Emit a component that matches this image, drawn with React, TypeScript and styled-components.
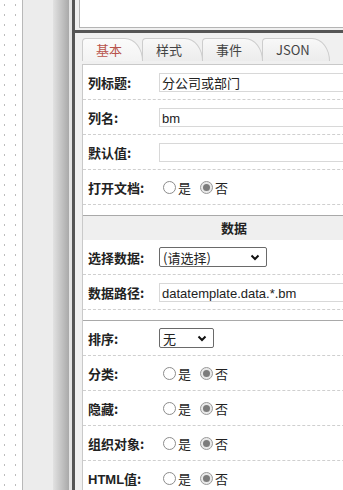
import React from "react";
import styled, { createGlobalStyle } from "styled-components";

const Global = createGlobalStyle`
  html, body { margin: 0; padding: 0; background: #fff; }
  body { width: 343px; height: 490px; overflow: hidden; }
  * { box-sizing: border-box; }
`;

const Page = styled.div`
  display: flex;
  width: 343px;
  height: 490px;
  overflow: hidden;
  font-family: "Noto Sans CJK SC", "Liberation Sans", sans-serif;
  color: #222;
`;

const GridCanvas = styled.div`
  flex: 0 0 23px;
  border-right: 1px solid #b8b8b8;
  background-color: #fff;
  background-image: radial-gradient(circle, #bdbdbd 0.7px, transparent 0.9px);
  background-size: 11px 10px;
  background-position: -1px 0;
`;

const SideStrip = styled.div`
  flex: 0 0 30px;
  background: #ececec;
`;

const Splitter = styled.div`
  flex: 0 0 16px;
  background: linear-gradient(to right, #e2e2e2, #a9a9a9);
`;

const SplitGap = styled.div`
  flex: 0 0 3px;
  background: #e4e4e4;
`;

const Main = styled.div`
  flex: 1 0 auto;
  width: 271px;
  height: 490px;
  display: flex;
  flex-direction: column;
  border-left: 3px solid #555;
  background: #f0f0f0;
  overflow: hidden;
`;

const TopArea = styled.div`
  flex: 0 0 30px;
  padding: 0 0 2px 4px;
  display: flex;
`;

const TopBox = styled.div`
  flex: 1;
  background: #fff;
  border: 1px solid #b4b4b4;
  border-top: none;
  border-right: none;
`;

const Divider = styled.div`
  flex: 0 0 3px;
  background: #555;
`;

const PropPanel = styled.div`
  flex: 1 0 auto;
  padding: 5px 0 0 7px;
  display: flex;
  flex-direction: column;
`;

const TabBar = styled.div`
  display: flex;
  flex: 0 0 23px;
  margin-bottom: 3px;
`;

const Tab = styled.div<{ $active?: boolean; $w: number }>`
  flex: 0 0 ${(p) => p.$w}px;
  height: 23px;
  margin-right: -1px;
  border: 1px solid #cdcdcd;
  border-bottom: none;
  border-radius: 4px 18px 0 0 / 4px 23px 0 0;
  background: ${(p) =>
    p.$active
      ? "linear-gradient(#fbfbfb, #f3f3f3)"
      : "linear-gradient(#f8f8f8, #ececec)"};
  color: ${(p) => (p.$active ? "#b8544c" : "#444")};
  font-size: 13px;
  line-height: 22px;
  padding-left: 13px;
`;

const Content = styled.div`
  width: 303px;
  flex: 1 0 auto;
  background: #fff;
  border-top: 1px solid #c9c9c9;
  border-left: 1px solid #c9c9c9;
`;

const Section = styled.div<{ $first?: boolean }>`
  border-top: ${(p) => (p.$first ? "none" : "1px solid #a9a9a9")};
  padding-bottom: 10px;
`;

const SectionHead = styled.div`
  height: 24px;
  background: #efefef;
  text-align: center;
  font-weight: bold;
  font-size: 13px;
  line-height: 24px;
`;

const Row = styled.div`
  display: flex;
  align-items: center;
  height: 35px;
  padding-left: 5px;
  border-bottom: 1px dashed #cfcfcf;
`;

const Label = styled.div`
  flex: 0 0 71px;
  font-weight: bold;
  font-size: 13px;
  color: #222;
`;

const TextBox = styled.div`
  flex: 1;
  height: 19px;
  border: 1px solid #d8d8d8;
  font-size: 13px;
  line-height: 17px;
  padding-left: 2px;
  color: #222;
  white-space: nowrap;
`;

const Latin = styled.span`
  font-family: "Liberation Sans", Arial, sans-serif;
`;

const Select = styled.div<{ $w: number }>`
  width: ${(p) => p.$w}px;
  height: 20px;
  border: 1px solid #6a6a6a;
  border-radius: 2px;
  display: flex;
  align-items: center;
  justify-content: space-between;
  padding: 0 6px 0 3px;
  font-size: 13px;
  color: #222;
`;

const RadioGroup = styled.div`
  display: flex;
  align-items: center;
  margin-left: 4px;
  font-size: 13px;
`;

const RadioItem = styled.div`
  display: flex;
  align-items: center;
  margin-right: 9px;
  gap: 2px;
`;

const Circle = styled.span<{ $on?: boolean }>`
  width: 13px;
  height: 13px;
  border-radius: 50%;
  border: 1px solid ${(p) => (p.$on ? "#9a9a9a" : "#8c8c8c")};
  background: ${(p) => (p.$on ? "#e9e9e9" : "#fff")};
  display: flex;
  align-items: center;
  justify-content: center;
  &::after {
    content: "";
    display: ${(p) => (p.$on ? "block" : "none")};
    width: 7px;
    height: 7px;
    border-radius: 50%;
    background: #7c7c7c;
  }
`;

const Chevron = () => (
  <svg width="10" height="7" viewBox="0 0 10 7">
    <polyline points="1.5,1.5 5,5 8.5,1.5" fill="none" stroke="#111" strokeWidth="2" />
  </svg>
);

const YesNo = () => (
  <RadioGroup>
    <RadioItem>
      <Circle />
      是
    </RadioItem>
    <RadioItem>
      <Circle $on />
      否
    </RadioItem>
  </RadioGroup>
);

export default function App() {
  return (
    <>
      <Global />
      <Page>
        <GridCanvas />
        <SideStrip />
        <Splitter />
        <SplitGap />
        <Main>
          <TopArea>
            <TopBox />
          </TopArea>
          <Divider />
          <PropPanel>
            <TabBar>
              <Tab $active $w={61}>基本</Tab>
              <Tab $w={61}>样式</Tab>
              <Tab $w={61}>事件</Tab>
              <Tab $w={68}>JSON</Tab>
            </TabBar>
            <Content>
              <Section $first>
                <Row>
                  <Label>列标题:</Label>
                  <TextBox>分公司或部门</TextBox>
                </Row>
                <Row>
                  <Label>列名:</Label>
                  <TextBox><Latin>bm</Latin></TextBox>
                </Row>
                <Row>
                  <Label>默认值:</Label>
                  <TextBox />
                </Row>
                <Row>
                  <Label>打开文档:</Label>
                  <YesNo />
                </Row>
              </Section>
              <Section>
                <SectionHead>数据</SectionHead>
                <Row>
                  <Label>选择数据:</Label>
                  <Select $w={108}>
                    <span>(请选择)</span>
                    <Chevron />
                  </Select>
                </Row>
                <Row>
                  <Label>数据路径:</Label>
                  <TextBox><Latin>datatemplate.data.*.bm</Latin></TextBox>
                </Row>
              </Section>
              <Section>
                <Row>
                  <Label>排序:</Label>
                  <Select $w={55}>
                    <span>无</span>
                    <Chevron />
                  </Select>
                </Row>
                <Row>
                  <Label>分类:</Label>
                  <YesNo />
                </Row>
                <Row>
                  <Label>隐藏:</Label>
                  <YesNo />
                </Row>
                <Row>
                  <Label>组织对象:</Label>
                  <YesNo />
                </Row>
                <Row>
                  <Label><Latin>HTML</Latin>值:</Label>
                  <YesNo />
                </Row>
              </Section>
            </Content>
          </PropPanel>
        </Main>
      </Page>
    </>
  );
}
